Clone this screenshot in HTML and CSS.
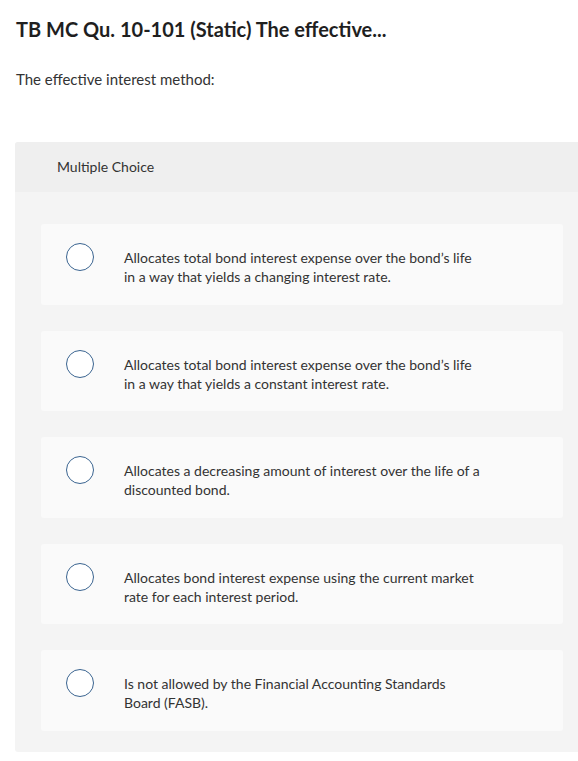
FILE: index.html
```html
<!DOCTYPE html>
<html lang="en">
<head>
<meta charset="utf-8">
<title>TB MC Qu. 10-101</title>
<link rel="stylesheet" href="styles.css">
</head>
<body>
<h1 class="title">TB MC Qu. 10-101 (Static) The effective...</h1>
<p class="prompt">The effective interest method:</p>
<section class="mc">
  <div class="mc-header">Multiple Choice</div>
  <div class="mc-body">
    <div class="option"><span class="radio"></span><span class="option-text">Allocates total bond interest expense over the bond’s life in a way that yields a changing interest rate.</span></div>
    <div class="option"><span class="radio"></span><span class="option-text">Allocates total bond interest expense over the bond’s life in a way that yields a constant interest rate.</span></div>
    <div class="option"><span class="radio"></span><span class="option-text">Allocates a decreasing amount of interest over the life of a discounted bond.</span></div>
    <div class="option"><span class="radio"></span><span class="option-text">Allocates bond interest expense using the current market rate for each interest period.</span></div>
    <div class="option"><span class="radio"></span><span class="option-text">Is not allowed by the Financial Accounting Standards Board (FASB).</span></div>
  </div>
</section>
</body>
</html>
```

FILE: styles.css
```css
html, body {
  margin: 0;
  padding: 0;
  background: #ffffff;
}
body {
  font-family: Lato, "Open Sans", sans-serif;
  color: #333333;
}
.title {
  margin: 0;
  padding: 17px 0 0 16px;
  font-size: 20px;
  line-height: 24px;
  font-weight: 700;
  color: #1f1f1f;
}
.prompt {
  margin: 28px 0 0 16px;
  font-size: 15px;
  line-height: 20px;
  color: #333333;
}
.mc {
  margin: 53px 0 0 15px;
  background: #f4f4f4;
  border-radius: 3px 0 0 3px;
  overflow: hidden;
}
.mc-header {
  height: 50px;
  box-sizing: border-box;
  padding: 15px 0 0 42px;
  background: #efefef;
  font-size: 14px;
  line-height: 20px;
  color: #333333;
}
.mc-body {
  display: flex;
  flex-direction: column;
  gap: 26px;
  padding: 32px 15px 21px 26px;
}
.option {
  display: flex;
  align-items: flex-start;
  gap: 30px;
  padding: 19px 20px 18.5px 25px;
  background: #fafafa;
  border-radius: 3px;
}
.radio {
  flex: none;
  width: 28px;
  height: 28px;
  box-sizing: border-box;
  border: 1.5px solid #3a6490;
  border-radius: 50%;
  background: #ffffff;
}
.option-text {
  margin-top: 5px;
  max-width: 360px;
  font-size: 14px;
  line-height: 19px;
  color: #333333;
}
```
